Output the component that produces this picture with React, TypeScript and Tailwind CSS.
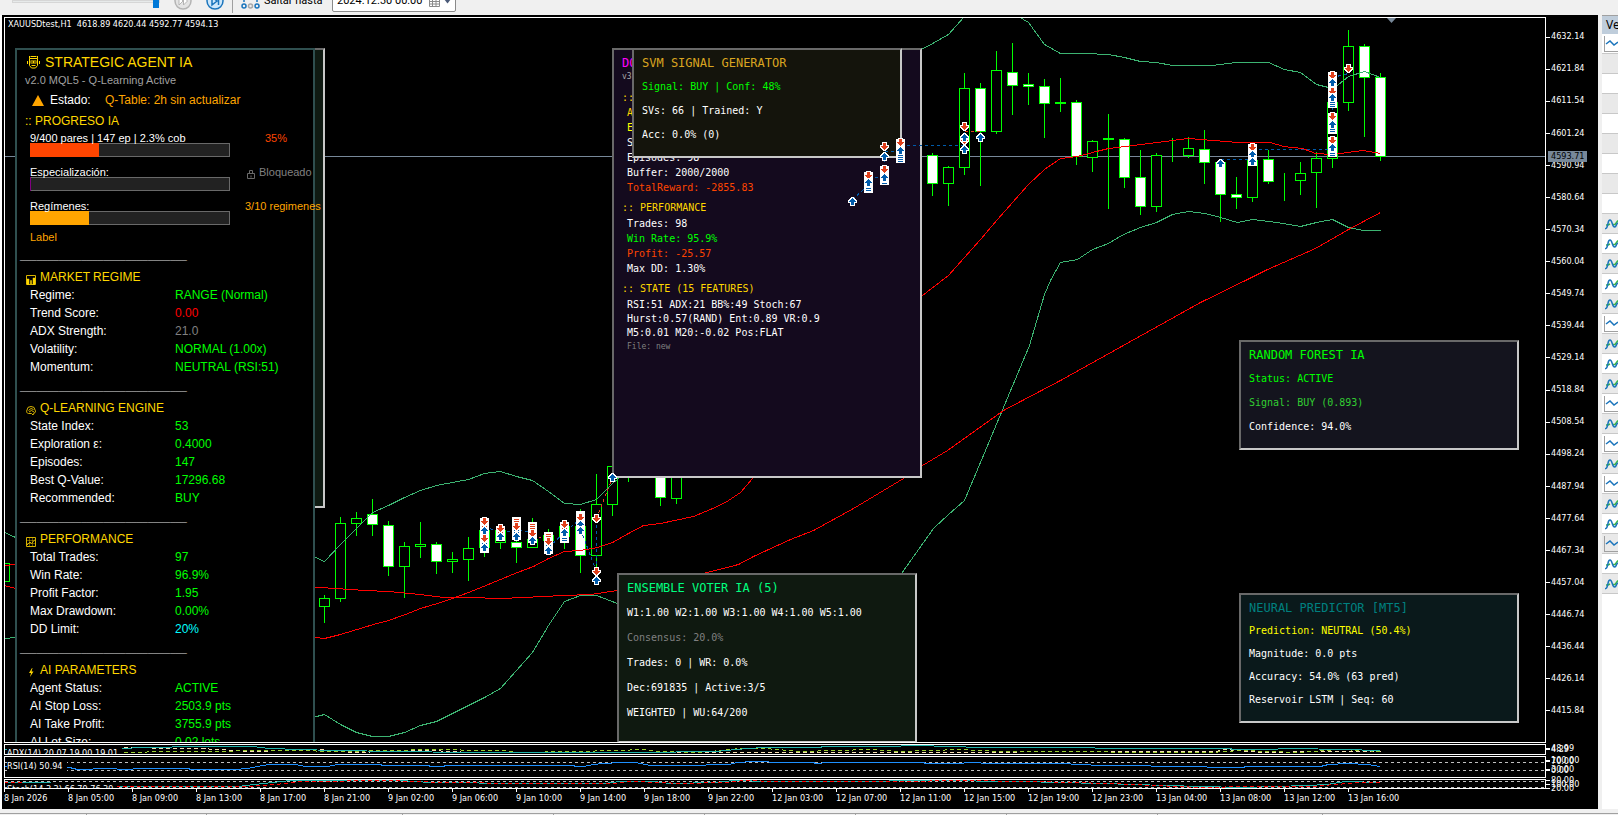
import type { ReactNode } from "react";

type Candle = [x: number, high: number, top: number, bottom: number, low: number, bear: 0 | 1];

const CANDLES: Candle[] = [
  [4, 563, 563, 581, 581, 0],
  [324, 595, 598, 606, 622, 0],
  [340, 517, 523, 598, 601, 0],
  [356, 512, 518, 523, 535, 0],
  [372, 499, 514, 524, 535, 1],
  [388, 521, 525, 566, 575, 1],
  [404, 542, 546, 566, 597, 0],
  [420, 522, 544, 546, 557, 0],
  [436, 542, 544, 561, 573, 1],
  [452, 552, 559, 561, 572, 0],
  [468, 537, 548, 559, 580, 0],
  [484, 518, 530, 547, 556, 0],
  [500, 525, 530, 542, 548, 0],
  [516, 540, 542, 547, 562, 1],
  [532, 518, 539, 547, 547, 0],
  [548, 529, 535, 540, 550, 0],
  [564, 520, 526, 536, 548, 0],
  [580, 509, 526, 555, 572, 1],
  [596, 474, 504, 555, 568, 0],
  [612, 466, 466, 504, 515, 0],
  [628, 450, 460, 470, 481, 0],
  [660, 450, 460, 497, 505, 1],
  [676, 450, 460, 498, 503, 0],
  [932, 153, 155, 183, 195, 1],
  [948, 166, 167, 183, 205, 0],
  [964, 73, 88, 167, 174, 0],
  [980, 83, 88, 131, 185, 1],
  [996, 51, 70, 131, 133, 0],
  [1012, 43, 72, 85, 114, 1],
  [1028, 73, 84, 86, 104, 1],
  [1044, 79, 86, 103, 137, 1],
  [1060, 78, 102, 103, 111, 0],
  [1076, 100, 102, 156, 164, 1],
  [1092, 140, 141, 157, 171, 0],
  [1108, 114, 138, 139, 208, 0],
  [1124, 138, 139, 177, 187, 1],
  [1140, 150, 177, 206, 214, 1],
  [1156, 153, 155, 206, 211, 0],
  [1172, 138, 155, 155, 161, 0],
  [1188, 137, 148, 155, 157, 0],
  [1204, 130, 149, 162, 183, 1],
  [1220, 160, 162, 194, 221, 1],
  [1236, 177, 194, 197, 208, 1],
  [1252, 145, 160, 197, 201, 0],
  [1268, 150, 159, 181, 183, 1],
  [1284, 173, 180, 180, 200, 0],
  [1300, 162, 173, 180, 194, 0],
  [1316, 152, 158, 172, 207, 0],
  [1332, 102, 102, 158, 167, 0],
  [1348, 30, 46, 102, 110, 0],
  [1364, 44, 46, 77, 136, 1],
  [1380, 73, 77, 156, 160, 1],
];

const UPPER_BAND = [
  "4,532 15,537",
  "308,554 315,557 324,561 340,544 356,528 372,512 388,505 404,497 420,490 436,485 452,482 468,479 484,473 500,471 516,476 532,480 548,491 564,503 580,504 596,499 612,483 640,460",
  "915,51 925,47 948,34 964,16",
  "1018,16 1028,22 1044,44 1060,53 1084,53 1108,54 1124,57 1140,61 1156,62 1172,65 1212,65 1236,62 1268,62 1284,69 1300,72 1316,84 1332,88 1338,84 1348,76 1364,71 1380,77",
];

const LOWER_BAND = [
  "4,638 15,637",
  "308,718 324,714 340,724 356,732 372,736 388,736 404,732 420,725 436,721 452,713 468,705 484,697 500,688 516,670 532,652 548,625 564,601 580,595 596,595 617,603 630,608",
  "895,582 901,573 933,528 948,514 964,500 985,450 1003,407 1029,345 1044,294 1050,280 1060,262 1077,259 1092,249 1108,243 1123,234 1140,227 1156,222 1172,214 1188,211 1205,213 1220,217 1237,222 1252,219 1276,222 1300,226 1316,222 1332,219 1348,227 1363,230 1380,230",
];

const SLOW_MA = [
  "4,565 15,564",
  "305,586 335,588 365,590 388,591 420,594 443,597 468,597 500,598 523,597 563,595 590,594 617,590 703,573 738,564 753,556 790,539 813,530 853,508 903,478 922,465 947,450 1003,410 1060,380 1130,341 1200,302 1247,279 1267,269 1315,248 1348,229 1380,212",
];

const FAST_MA = [
  "4,585 15,588",
  "305,636 324,638 340,634 373,624 388,620 405,614 420,608 437,603 452,598 468,592 483,586 500,579 517,572 533,566 548,558 564,551 580,550 597,547 612,542 628,533 643,525 660,523 693,516 710,509 725,502 740,492 752,478 775,450",
  "915,300 922,295 948,275 964,257 980,239 997,219 1012,202 1028,184 1044,169 1060,158 1077,156 1092,152 1108,148 1133,145 1172,140 1188,138 1213,140 1237,142 1270,142 1283,146 1302,148 1315,153 1332,154 1347,152 1363,150 1380,153",
];

type Deal = [x: number, y: number, side: "buy" | "sell"];

const DEALS: Deal[] = [
  [484, 538, "sell"], [484, 521, "sell"], [484, 530, "buy"], [484, 547, "buy"],
  [500, 528, "sell"], [500, 536, "buy"],
  [516, 526, "sell"], [516, 536, "buy"],
  [532, 533, "sell"], [532, 540, "buy"],
  [548, 541, "sell"], [548, 550, "buy"],
  [564, 524, "sell"], [564, 532, "buy"],
  [580, 517, "sell"], [580, 524, "buy"], [580, 530, "buy"],
  [596, 518, "sell"], [596, 571, "sell"], [596, 580, "buy"],
  [612, 477, "buy"],
  [852, 201, "buy"],
  [868, 175, "sell"], [868, 182, "buy"],
  [884, 146, "sell"], [884, 156, "buy"], [884, 169, "sell"], [884, 177, "buy"],
  [900, 142, "sell"], [900, 150, "buy"],
  [964, 140, "sell"], [964, 126, "sell"], [964, 137, "buy"], [964, 149, "buy"],
  [980, 137, "buy"],
  [1220, 163, "buy"],
  [1252, 147, "sell"], [1252, 154, "buy"], [1252, 161, "buy"],
  [1332, 75, "sell"], [1332, 82, "buy"], [1332, 91, "sell"], [1332, 97, "buy"],
  [1332, 116, "sell"], [1332, 124, "buy"],
  [1332, 140, "sell"], [1332, 147, "buy"],
  [1348, 68, "sell"],
];

// columns of deals so dense that only stripes are left of the arrows
const STACKS: [x: number, top: number, bottom: number][] = [
  [484, 518, 553], [500, 526, 541], [516, 517, 540], [532, 522, 543], [548, 532, 554],
  [564, 522, 543], [580, 511, 532], [868, 172, 193], [884, 166, 185], [900, 139, 163],
  [1252, 144, 166], [1332, 72, 108], [1332, 113, 134], [1332, 137, 157],
];

const BUY_LINKS = [
  "900,145 964,145", "884,151 900,151", "884,146 884,169", "868,177 884,177", "852,199 864,188",
  "964,131 964,149", "1220,159 1252,159", "1252,149 1332,149", "1332,77 1348,73", "1332,100 1332,140",
  "484,526 500,532 516,530 532,531", "548,547 564,532 580,518", "580,529 596,571", "596,518 596,571",
];
const SELL_LINKS = ["964,131 980,131", "532,537 548,538", "596,518 612,477"];

const PRICES = [
  "4632.14", "4621.84", "4611.54", "4601.24", "4590.94", "4580.64", "4570.34", "4560.04",
  "4549.74", "4539.44", "4529.14", "4518.84", "4508.54", "4498.24", "4487.94", "4477.64",
  "4467.34", "4457.04", "4446.74", "4436.44", "4426.14", "4415.84",
];

const TIMES = [
  "8 Jan 2026", "8 Jan 05:00", "8 Jan 09:00", "8 Jan 13:00", "8 Jan 17:00", "8 Jan 21:00",
  "9 Jan 02:00", "9 Jan 06:00", "9 Jan 10:00", "9 Jan 14:00", "9 Jan 18:00", "9 Jan 22:00",
  "12 Jan 03:00", "12 Jan 07:00", "12 Jan 11:00", "12 Jan 15:00", "12 Jan 19:00", "12 Jan 23:00",
  "13 Jan 04:00", "13 Jan 08:00", "13 Jan 12:00", "13 Jan 16:00",
];

const ADX = "4,749 30,748 96,748 124,748 140,747 204,746 252,746 268,748 300,749 333,750 400,751 463,752 620,752 637,752 715,751 747,748 765,747 877,746 925,745 942,746 988,747 1200,748 1262,749 1293,748 1342,749 1380,750";
const DI_PLUS = "124,752 170,751 300,750 330,751 400,750 420,749 500,750 520,752 620,750 640,749 660,751 700,752 740,748 765,748 800,751 870,749 900,751 960,749 1000,751 1210,752 1240,750 1300,752 1340,749 1380,751";
const DI_MINUS = "96,747 200,748 250,751 320,749 350,752 430,750 470,752 700,752 815,752 940,752 1100,751 1215,751 1225,749 1260,752 1320,751 1380,751";
const RSI = "4,766 69,767 77,769 108,768 125,769 140,768 188,768 190,769 235,769 247,768 257,766 268,764 295,764 305,766 327,766 337,764 380,764 382,765 428,765 430,766 443,766 445,765 573,765 575,766 583,766 593,764 603,763 620,762 635,762 650,765 683,765 728,764 737,762 753,761 767,761 770,762 812,762 816,763 828,762 923,762 925,763 955,763 972,762 988,763 1060,763 1100,765 1200,766 1213,767 1243,767 1245,766 1320,766 1328,764 1348,763 1367,764 1380,766";
const STOCH = "4,782 40,782 80,784 118,786 237,786 263,783 290,780 400,780 430,782 525,783 603,783 620,781 653,781 670,783 715,782 733,780 770,781 885,781 893,780 930,780 1020,781 1100,783 1200,786 1240,787 1307,785 1327,784 1345,781 1380,782";
const STOCH_SIGNAL = "4,782 44,783 90,785 118,786 245,786 275,784 300,781 390,780 440,782 525,783 615,783 630,781 660,782 680,783 725,782 745,780 775,781 900,781 960,780 1030,781 1110,783 1200,787 1250,786 1310,786 1335,784 1360,782 1380,782";

const SECTIONS = [
  {
    title: "MARKET REGIME",
    icon: "bars",
    rows: [
      ["Regime:", "RANGE (Normal)", "text-[#00ff00]"],
      ["Trend Score:", "0.00", "text-[#ff0000]"],
      ["ADX Strength:", "21.0", "text-[#808080]"],
      ["Volatility:", "NORMAL (1.00x)", "text-[#00ff00]"],
      ["Momentum:", "NEUTRAL (RSI:51)", "text-[#00ff00]"],
    ],
  },
  {
    title: "Q-LEARNING ENGINE",
    icon: "brain",
    rows: [
      ["State Index:", "53", "text-[#00ff00]"],
      ["Exploration ε:", "0.4000", "text-[#00ff00]"],
      ["Episodes:", "147", "text-[#00ff00]"],
      ["Best Q-Value:", "17296.68", "text-[#00ff00]"],
      ["Recommended:", "BUY", "text-[#00ff00]"],
    ],
  },
  {
    title: "PERFORMANCE",
    icon: "trend",
    rows: [
      ["Total Trades:", "97", "text-[#00ff00]"],
      ["Win Rate:", "96.9%", "text-[#00ff00]"],
      ["Profit Factor:", "1.95", "text-[#00ff00]"],
      ["Max Drawdown:", "0.00%", "text-[#00ff00]"],
      ["DD Limit:", "20%", "text-[#00ffff]"],
    ],
  },
  {
    title: "AI PARAMETERS",
    icon: "bolt",
    rows: [
      ["Agent Status:", "ACTIVE", "text-[#00ff00]"],
      ["AI Stop Loss:", "2503.9 pts", "text-[#00ff00]"],
      ["AI Take Profit:", "3755.9 pts", "text-[#00ff00]"],
      ["AI Lot Size:", "0.02 lots", "text-[#00ff00]"],
    ],
  },
];

const LINE_ROWS = [0, 14, 18, 20, 22, 25];

function Lines({ paths, color, dash }: { paths: string[]; color: string; dash?: string }) {
  return (
    <g fill="none" stroke={color} strokeDasharray={dash} shapeRendering="crispEdges" transform="translate(0.5 0.5)">
      {paths.map((p) => (
        <polyline key={p} points={p} />
      ))}
    </g>
  );
}

function Arrow({ x, y, side }: { x: number; y: number; side: "buy" | "sell" }) {
  const buy = side === "buy";
  return (
    <g transform={`translate(${x + 0.5} ${y + 0.5}) scale(1 ${buy ? 1 : -1})`}>
      <path d="M-1.500-4.500h3v1h1v1h1v1h1v3h-2v3h-5v-3h-2v-3h1v-1h1v-1h1z" fill="#fff" />
      <path d="M-.5-3.500h1v1h1v1h1v1h1v1h-2v3h-3v-3h-2v-1h1v-1h1v-1h1z" fill={buy ? "#005bab" : "#e0401c"} />
    </g>
  );
}

function Stack({ x, top, bottom }: { x: number; top: number; bottom: number }) {
  const middle = Math.floor((top + bottom) / 2);
  return (
    <g>
      <rect x={x - 4} y={top} width="9" height={bottom - top} rx="1" fill="#fff" />
      <path d={`M${x + 0.5} ${top + 2}V${middle}`} stroke="#e0401c" strokeWidth="5" strokeDasharray="1 1" />
      <path d={`M${x + 0.5} ${middle + 2}V${bottom - 1}`} stroke="#005bab" strokeWidth="5" strokeDasharray="1 1" />
    </g>
  );
}

function Glyph({ name }: { name: string }) {
  return (
    <svg width="10" height="11" viewBox="0 0 10 11" fill="none" stroke="#d9b400" className="shrink-0">
      {name === "bars" && (
        <>
          <path d="M.5 1.500h9v9h-9z" />
          <path d="M1 5h2v5.500H1zM4.500 6.500h1V10h-1zM7 4h2v6.500H7z" fill="#ffd700" stroke="#ffd700" strokeWidth=".5" />
        </>
      )}
      {name === "brain" && (
        <path d="M1 5a4 3.500 0 0 1 8 0c1 1 .5 3-1 3L7 10 5.500 8.500H2.500C1 8.500 0 6.500 1 5zM2.500 5.500 5 3.500l2.500 1M3 7l2.500-1.500L8 7" />
      )}
      {name === "trend" && (
        <>
          <path d="M.5 1.500h9v9h-9z" />
          <path d="M3.500 1.500v9M6.500 1.500v9M.5 4.500h9M.5 7.500h9" opacity=".45" />
          <path d="m1 9 3-3 1.500 1.500L9 3.500" />
        </>
      )}
      {name === "bolt" && <path d="M6 1 3 6h2L4 10l3.500-5.500h-2L6.500 1z" fill="#ffd700" stroke="none" />}
    </svg>
  );
}

function Robot() {
  return (
    <svg width="13" height="14" viewBox="0 0 13 14" fill="none" stroke="#ffd700" className="shrink-0">
      <path d="M2.500 3.500h8v7l-2 2.500h-4l-2-2.500zM2.500 3.500V1M10.500 3.500V1M.5 6v3M12.500 6v3M3.500 1.500h6" />
      <path d="M3.500 5.500h6v3h-6z" fill="#ffd700" stroke="none" />
      <path d="M5 6v2M8 6v2" stroke="#000" />
      <path d="M4.500 10.500h4" />
    </svg>
  );
}

function Panel({ className, children }: { className: string; children?: ReactNode }) {
  return (
    <section
      className={`absolute border-2 border-t-[#696969] border-r-[#c8c8c8] border-b-[#c8c8c8] border-l-[#696969] px-2 font-['DejaVu_Sans_Mono',monospace] text-[10px] whitespace-pre text-white ${className}`}
    >
      {children}
    </section>
  );
}

function PanelTitle({ className, children }: { className: string; children: ReactNode }) {
  return <h2 className={`pt-0.5 text-xs leading-[23px] ${className}`}>{children}</h2>;
}

type MeterProps = { label: string; percent: number; fill: string; children: ReactNode };

function Meter({ label, percent, fill, children }: MeterProps) {
  return (
    <div className="flex text-[11px] leading-[11px]">
      <div className="w-[200px] shrink-0">
        <p className="h-[11px] pt-px">{label}</p>
        <div
          role="progressbar"
          aria-label={label}
          aria-valuenow={percent}
          className="h-3.5 border border-[#696969] bg-[#222222]"
        >
          <div className={`-mt-px -ml-px h-3.5 ${fill}`} style={{ width: `${percent}%` }} />
        </div>
      </div>
      <div className="ml-[15px] pt-px whitespace-nowrap">{children}</div>
    </div>
  );
}

function AgentPanel() {
  return (
    <section className="absolute top-[30px] left-2.5 h-[800px] w-[300px] border-2 border-[#2f4f4f] bg-black font-['Liberation_Sans',Arial,sans-serif] text-xs text-white">
      <h1 className="flex h-6 items-center gap-[5px] pl-2.5 text-sm whitespace-nowrap text-[#ffd700]">
        <Robot />
        STRATEGIC AGENT IA
      </h1>
      <p className="pl-2 text-[11px] leading-3 text-[#a0a0a0]">v2.0 MQL5 - Q-Learning Active</p>
      <div className="flex h-7 items-center pl-[15px]">
        <svg width="12" height="11" viewBox="0 0 12 11" fill="#ffa500">
          <path d="M6 0 12 11H0z" />
        </svg>
        <span className="ml-1.5 w-[55px]">Estado:</span>
        <span className="whitespace-nowrap text-[#ffa500]">Q-Table: 2h sin actualizar</span>
      </div>
      <h2 className="mb-1 pl-2 leading-[14px] text-[#ffd700]">:: PROGRESO IA</h2>
      <div className="flex flex-col gap-[9px] pl-[13px]">
        <Meter label="9/400 pares | 147 ep | 2.3% cob" percent={35} fill="bg-[#ff4500]">
          <span className="pl-5 text-[#ff4500]">35%</span>
        </Meter>
        <Meter label="Especialización:" percent={0} fill="border-l border-[#800080]">
          <span className="flex items-start gap-1 pl-0.5 text-[#808080]">
            <svg width="8" height="11" viewBox="0 0 8 11" fill="none" stroke="#696969" className="mt-0.5">
              <path d="M.5 4.500h7v5h-7zM2.500 4.500v-3h3v3M4 6.500v2" />
            </svg>
            Bloqueado
          </span>
        </Meter>
        <Meter label="Regímenes:" percent={30} fill="bg-[#ffa500]">
          <span className="text-[#ffa500]">3/10 regimenes</span>
        </Meter>
      </div>
      <p className="mt-1.5 mb-[7px] pl-[13px] text-[11px] leading-3 text-[#ffa500]">Label</p>
      {SECTIONS.map((section) => (
        <div key={section.title} className="mb-[5px]">
          <p className="pl-[3px] text-[10px] leading-3 text-[#a9a9a9]">______________________________</p>
          <h2 className="mt-1.5 flex h-[18px] items-center gap-1 pl-[9px] text-[#ffd700]">
            <span className="pt-1">
              <Glyph name={section.icon} />
            </span>
            {section.title}
          </h2>
          <dl className="grid grid-cols-[145px_1fr] pl-[13px] leading-[18px]">
            {section.rows.map(([label, value, color]) => (
              <div key={label} className="col-span-2 grid grid-cols-subgrid">
                <dt>{label}</dt>
                <dd className={`whitespace-nowrap ${color}`}>{value}</dd>
              </div>
            ))}
          </dl>
        </div>
      ))}
    </section>
  );
}

function DqnPanel() {
  return (
    <Panel className="top-[30px] left-[607px] h-[430px] w-[310px] bg-[#140a1e] pt-1.5">
      <h2 className="text-xs leading-[14px] text-[#ff00ff]">DQ</h2>
      <p className="text-[8px] leading-[14px] text-[#a9a9a9]">v3</p>
      <h3 className="mt-1.5 leading-[15px] text-[#ffd700]">::</h3>
      <div className="pl-[5px] leading-[15px]">
        <p className="text-[#ffd700]">A</p>
        <p className="text-[#ffff00]">E</p>
        <p>S</p>
        <p>Episodes: 98</p>
        <p>Buffer: 2000/2000</p>
        <p className="text-[#ff4500]">TotalReward: -2855.83</p>
      </div>
      <h3 className="mt-[5px] leading-[15px] text-[#ffd700]">:: PERFORMANCE</h3>
      <div className="mt-px pl-[5px] leading-[15px]">
        <p>Trades: 98</p>
        <p className="text-[#00ff00]">Win Rate: 95.9%</p>
        <p className="text-[#ff4500]">Profit: -25.57</p>
        <p>Max DD: 1.30%</p>
      </div>
      <h3 className="mt-[5px] leading-[15px] text-[#ffd700]">:: STATE (15 FEATURES)</h3>
      <div className="mt-0.5 pl-[5px] leading-[14px]">
        <p>RSI:51 ADX:21 BB%:49 Stoch:67</p>
        <p>Hurst:0.57(RAND) Ent:0.89 VR:0.9</p>
        <p>M5:0.01 M20:-0.02 Pos:FLAT</p>
        <p className="text-[8px] text-[#808080]">File: new</p>
      </div>
    </Panel>
  );
}

function MainPlot() {
  return (
    <div className="relative min-w-0 flex-1 overflow-hidden border border-white">
      <svg className="absolute inset-0 h-full w-full">
        <g transform="translate(-5 -18)">
          <path d="M4 156.500h4000" stroke="#778899" />
          <g stroke="#00ff00" shapeRendering="crispEdges">
            {CANDLES.map(([x, high, top, bottom, low, bear]) => (
              <g key={x}>
                <path d={`M${x + 0.5} ${high}V${low + 1}`} />
                <rect x={x - 4.5} y={top + 0.5} width="10" height={bottom - top} fill={bear ? "#fff" : "#000"} />
              </g>
            ))}
          </g>
          <Lines paths={UPPER_BAND} color="#3cb371" />
          <Lines paths={LOWER_BAND} color="#3cb371" />
          <Lines paths={SLOW_MA} color="#ff0000" />
          <Lines paths={FAST_MA} color="#ff0000" />
          <path d="M1387 18h9l-4.500 5z" fill="#778899" />
        </g>
      </svg>
      <p className="absolute top-0 left-[3px] text-[9px] leading-3 whitespace-pre text-white">
        XAUUSDtest,H1  4618.89 4620.44 4592.77 4594.13
      </p>

      <Panel className="top-[30px] left-2.5 h-[460px] w-[310px] bg-[#0f1a12]" />
      <AgentPanel />
      <DqnPanel />
      <Panel className="top-[30px] left-[627px] h-[110px] w-[270px] bg-[#14140c] leading-6">
        <PanelTitle className="text-[#daa520]">SVM SIGNAL GENERATOR</PanelTitle>
        <p className="text-[#00ff00]">Signal: BUY | Conf: 48%</p>
        <p>SVs: 66 | Trained: Y</p>
        <p>Acc: 0.0% (0)</p>
      </Panel>
      <Panel className="top-[555px] left-[612px] h-[170px] w-[300px] bg-[#0f1910] leading-[25px]">
        <PanelTitle className="text-[#00ff7f]">ENSEMBLE VOTER IA (5)</PanelTitle>
        <p>W1:1.00 W2:1.00 W3:1.00 W4:1.00 W5:1.00</p>
        <p className="text-[#808080]">Consensus: 20.0%</p>
        <p>Trades: 0 | WR: 0.0%</p>
        <p>Dec:691835 | Active:3/5</p>
        <p>WEIGHTED | WU:64/200</p>
      </Panel>
      <Panel className="top-[322px] right-[26px] h-[110px] w-[280px] bg-[#14141e] leading-6">
        <PanelTitle className="text-[#00ff00]">RANDOM FOREST IA</PanelTitle>
        <p className="text-[#00ff00]">Status: ACTIVE</p>
        <p className="text-[#32cd32]">Signal: BUY (0.893)</p>
        <p>Confidence: 94.0%</p>
      </Panel>
      <Panel className="top-[575px] right-[26px] h-[130px] w-[280px] bg-[#0a191b] leading-[23px]">
        <PanelTitle className="text-[#008080]">NEURAL PREDICTOR [MT5]</PanelTitle>
        <div className="-mt-px">
          <p className="text-[#ffff00]">Prediction: NEUTRAL (50.4%)</p>
          <p>Magnitude: 0.0 pts</p>
          <p>Accuracy: 54.0% (63 pred)</p>
          <p>Reservoir LSTM | Seq: 60</p>
        </div>
      </Panel>

      <svg className="pointer-events-none absolute inset-0 h-full w-full">
        <g transform="translate(-5 -18)" shapeRendering="crispEdges">
          <Lines paths={BUY_LINKS} color="#005bab" dash="3 3" />
          <Lines paths={SELL_LINKS} color="#e0401c" dash="3 3" />
          {STACKS.map(([x, top, bottom]) => (
            <Stack key={`${x}-${top}`} x={x} top={top} bottom={bottom} />
          ))}
          {DEALS.map(([x, y, side]) => (
            <Arrow key={`${x}-${y}`} x={x} y={y} side={side} />
          ))}
        </g>
      </svg>
    </div>
  );
}

function SubPlot({ top, label, labelClass, children }: { top: number; label: string; labelClass: string; children: ReactNode }) {
  return (
    <div className="relative min-w-0 flex-1 overflow-hidden border border-white">
      <svg className="absolute inset-0 h-full w-full">
        <g transform={`translate(-5 ${-top})`}>{children}</g>
      </svg>
      <p className={`absolute left-0.5 bg-black pr-1 text-[9px] leading-3 text-white ${labelClass}`}>{label}</p>
    </div>
  );
}

function Level({ className, children }: { className: string; children: ReactNode }) {
  return (
    <span className={`absolute left-0 flex h-2.5 items-center gap-px leading-[10px] ${className}`}>
      <i className="h-px w-1 bg-white" />
      {children}
    </span>
  );
}

function Chart() {
  return (
    <div className="flex min-w-0 flex-1 flex-col gap-px overflow-hidden bg-black pt-0.5 pl-0.5 font-['DejaVu_Sans_Condensed','DejaVu_Sans',sans-serif] text-[9px] text-white">
      <div className="flex min-h-0 flex-1">
        <MainPlot />
        <div className="relative w-[52px] shrink-0">
          <div className="flex h-full flex-col justify-between pt-1 pb-4">
            {PRICES.map((price) => (
              <div key={price} className="flex h-8 items-center gap-px">
                <i className="h-px w-1 bg-white" />
                {price}
              </div>
            ))}
          </div>
          <span className="absolute top-[134px] left-0.5 h-[11px] bg-[#778899] px-[3px] leading-[11px] text-black">4593.71</span>
        </div>
      </div>

      <div className="flex h-[11px] shrink-0">
        <SubPlot top={745} label="ADX(14) 20.07 19.00 19.01" labelClass="top-0.5">
          <Lines paths={[DI_MINUS]} color="#f5deb3" dash="4 3" />
          <Lines paths={[DI_PLUS]} color="#9acd32" dash="4 3" />
          <Lines paths={[ADX]} color="#20b2aa" />
        </SubPlot>
        <div className="relative w-[52px] shrink-0">
          <Level className="-top-px">48.99</Level>
          <Level className="top-0">4.29</Level>
        </div>
      </div>

      <div className="flex h-[22px] shrink-0">
        <SubPlot top={757} label="RSI(14) 50.94" labelClass="top-[3px]">
          <Lines paths={["4,762 4000,762", "4,770 4000,770"]} color="#c0c0c0" dash="3 3" />
          <Lines paths={[RSI]} color="#1e90ff" />
        </SubPlot>
        <div className="relative w-[52px] shrink-0">
          <Level className="-top-px">100.00</Level>
          <Level className="top-0">70.00</Level>
          <Level className="top-2">30.00</Level>
          <Level className="top-[9px]">0.00</Level>
        </div>
      </div>

      <div className="flex h-2.5 shrink-0">
        <SubPlot top={780} label="Stoch(14,3,3) 66.79 76.39" labelClass="top-[3px]">
          <Lines paths={["4,781 4000,781", "4,787 4000,787"]} color="#c0c0c0" dash="3 3" />
          <Lines paths={[STOCH]} color="#20b2aa" />
          <Lines paths={[STOCH_SIGNAL]} color="#ff0000" dash="4 3" />
        </SubPlot>
        <div className="relative w-[52px] shrink-0">
          <Level className="-top-1">80.00</Level>
          <Level className="top-0">100.00</Level>
          <Level className="top-1">20.00</Level>
        </div>
      </div>

      <div className="-mt-px flex h-5 shrink-0 overflow-hidden">
        {TIMES.map((time) => (
          <div key={time} className="w-16 shrink-0 whitespace-nowrap">
            <div className="h-[3px] w-px bg-white" />
            <span className="block leading-3">{time}</span>
          </div>
        ))}
      </div>
    </div>
  );
}

function Toolbar() {
  return (
    <header className="h-[15px] shrink-0 overflow-hidden font-[Roboto,sans-serif] text-[11px] text-black">
      <div className="-mt-3 flex h-[26px] items-center">
        <input
          type="range"
          aria-label="Speed"
          defaultValue={100}
          className="ml-3 h-[3px] w-[148px] appearance-none border border-[#d6d6d6] bg-[#e7eaea] [&::-webkit-slider-thumb]:h-3.5 [&::-webkit-slider-thumb]:w-1.5 [&::-webkit-slider-thumb]:appearance-none [&::-webkit-slider-thumb]:bg-[#0078d7]"
        />
        <button type="button" aria-label="Fast forward" className="ml-3.5">
          <svg width="18" height="18" viewBox="0 0 18 18" fill="none" stroke="#b4b4b4">
            <circle cx="9" cy="9" r="8" fill="#e4e4e4" strokeWidth="1.500" />
            <path d="m5 5 4 4-4 4zM9.500 5l4 4-4 4z" fill="#fff" />
          </svg>
        </button>
        <button type="button" aria-label="Next step" className="ml-3.5">
          <svg width="18" height="18" viewBox="0 0 18 18" fill="none" stroke="#1b75bc">
            <circle cx="9" cy="9" r="8" fill="#cfe8fb" strokeWidth="1.500" />
            <path d="m6 5 5 4-5 4zM12.500 5v8" strokeWidth="1.500" />
          </svg>
        </button>
        <div className="ml-2 h-6 w-px bg-[#a0a0a0]" />
        <svg width="19" height="17" viewBox="0 0 19 17" fill="none" stroke="#1b75bc" className="ml-2" strokeWidth="1.500">
          <circle cx="3" cy="13" r="2" />
          <circle cx="9.500" cy="13" r="2" stroke="#a8a8a8" />
          <circle cx="16" cy="13" r="2" />
          <path d="M3 9V4h3M11 4h5v5" strokeDasharray="3 1" />
        </svg>
        <label htmlFor="jump" className="ml-1 w-[68px] text-[11px] whitespace-nowrap">
          Saltar hasta
        </label>
        <div className="flex h-[22px] w-[124px] items-center rounded-[2px] border border-[#8a8a8a] bg-white pl-1">
          <input id="jump" defaultValue="2024.12.30 00:00" className="w-[92px] text-[11px] outline-none" />
          <button type="button" aria-label="Open calendar" className="flex items-center gap-1">
            <svg width="11" height="11" viewBox="0 0 11 11" fill="none" stroke="#8a8a8a">
              <path d="M.5.500h10v10h-10zM.5 3.500h10M.5 5.500h10M.5 8h10M3.500 3v7M7 3v7" />
            </svg>
            <svg width="7" height="5" viewBox="0 0 7 5" fill="#4a5a78">
              <path d="M0 0h7L3.500 4.500z" />
            </svg>
          </button>
        </div>
      </div>
    </header>
  );
}

function Navigator() {
  return (
    <aside className="ml-1 w-4 shrink-0 overflow-hidden bg-white">
      <div className="h-[19px] border-t border-[#a0a0a0] bg-[#bfcddb] pl-1 font-['Noto_Sans',sans-serif] text-xs leading-[18px] text-black">
        Ve
      </div>
      {Array.from({ length: 28 }, (_, i) => {
        const boxed = LINE_ROWS.includes(i);
        return (
          <div
            key={i}
            className={`flex h-5 justify-end border-b border-[#c8c8c8] pt-0.5 pb-px ${
              i % 2 === 1 ? "bg-[#e9e9e9]" : "bg-white"
            }`}
          >
            {boxed && (
              <div className="h-4 w-3.5 border-b border-l border-[#a0a0a0]">
                <svg width="13" height="15" viewBox="0 0 13 15" fill="none" stroke="#1b75bc" strokeWidth="1.500">
                  <path d="m1 8 4-3 4 4 4-3" />
                </svg>
              </div>
            )}
            {!boxed && i > 8 && (
              <svg width="13" height="16" viewBox="0 0 13 16" fill="none" strokeWidth="1.500">
                <path d="M1 9h2l2-1M8 8.500h2l3-4" stroke="#39b54a" />
                <path d="M0 13l1.500-1c2-3 1-8 3.500-8s2 7 4.500 7 1-3 3.500-4" stroke="#1b75bc" />
              </svg>
            )}
          </div>
        );
      })}
    </aside>
  );
}

export default function App() {
  return (
    <div className="flex h-screen flex-col overflow-hidden bg-[#f0f0f0]">
      <Toolbar />
      <main className="flex min-h-0 flex-1">
        <div className="w-0.5 shrink-0 bg-white" />
        <Chart />
        <Navigator />
      </main>
      <footer className="h-1.5 shrink-0 pt-1">
        <div className="flex h-0.5 border-t border-[#a0a0a0]">
          <div className="w-[87px] border-r border-[#a0a0a0]" />
          <div className="w-[120px] border-r border-[#a0a0a0]" />
          <div className="w-[196px] border-r border-[#a0a0a0]" />
          {[1, 2, 3, 4, 5].map((n) => (
            <div key={n} className="w-[151px] border-r border-[#a0a0a0]" />
          ))}
          <div className="w-[165px] border-r border-[#a0a0a0]" />
        </div>
      </footer>
    </div>
  );
}
